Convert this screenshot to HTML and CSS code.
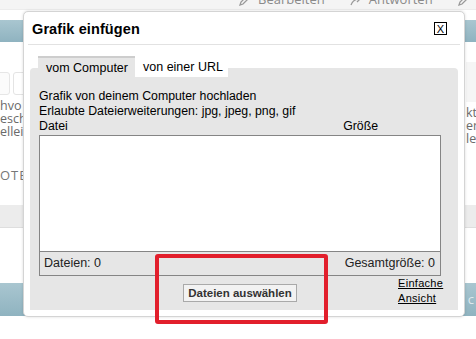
FILE: index.html
```html
<!DOCTYPE html>
<html lang="de">
<head>
<meta charset="utf-8">
<link rel="stylesheet" href="styles.css">
</head>
<body>
<div class="page">
  <div class="topbar">
    <div class="toolbar">
      <span class="tool"><svg class="ticon" width="11" height="11" viewBox="0 0 11 11"><path d="M1 10 L2 7 L8 1 L10 3 L4 9 Z" fill="none" stroke="#999" stroke-width="1.3"/></svg>Bearbeiten</span>
      <span class="sep"></span>
      <span class="tool"><svg class="ticon" width="11" height="11" viewBox="0 0 11 11"><path d="M1 10 C3 5 6 4 9 4 M7 1 L10 4 L7 7" fill="none" stroke="#999" stroke-width="1.3"/></svg>Antworten</span>
      <span class="sep"></span>
      <span class="tool"><svg class="ticon" width="11" height="11" viewBox="0 0 11 11"><path d="M1 10 L2 7 L8 1 L10 3 L4 9 Z" fill="none" stroke="#999" stroke-width="1.3"/></svg>Zitieren</span>
    </div>
  </div>
  <div class="gap"></div>
  <div class="nav"></div>
  <div class="content">
    <div class="lcol">
      <div class="boxrow"><span class="inp"></span><span class="gbtn">G</span></div>
      <div class="words">
        <div>hvo</div>
        <div>esch</div>
        <div>ellei</div>
      </div>
      <div class="quote">OTE</div>
    </div>
    <div class="rcol">
      <div class="rbox"></div>
      <div class="words">
        <div>kt</div>
        <div>er</div>
        <div>le</div>
      </div>
    </div>
  </div>
  <div class="band"></div>
  <div class="mid"></div>
  <div class="nav bottom"><span class="cc">c</span></div>
</div>

<div class="modal">
  <div class="mhead">
    <span class="mtitle">Grafik einfügen</span>
    <span class="close">X</span>
  </div>
  <div class="mbody">
    <div class="tabs">
      <span class="tab active">vom Computer</span>
      <span class="tab">von einer URL</span>
    </div>
    <div class="panel">
      <div class="line">Grafik von deinem Computer hochladen</div>
      <div class="line">Erlaubte Dateierweiterungen: jpg, jpeg, png, gif</div>
      <div class="line cols"><span>Datei</span><span class="size">Größe</span></div>
      <div class="filebox">
        <div class="list"></div>
        <div class="status"><span>Dateien: 0</span><span>Gesamtgröße: 0</span></div>
      </div>
      <div class="actions">
        <span></span>
        <span class="btn">Dateien auswählen</span>
        <a class="simple" href="#">Einfache Ansicht</a>
      </div>
    </div>
  </div>
</div>
<div class="mark"></div>
</body>
</html>
```

FILE: styles.css
```css
html, body {
  margin: 0;
  padding: 0;
  overflow: hidden;
  background: #fff;
}
body {
  width: 476px;
  height: 339px;
  position: relative;
  font-family: "Open Sans", sans-serif;
}
.page {
  width: 476px;
}
.topbar {
  height: 9px;
  background: #f4f4f4;
  border-bottom: 1px solid #ececec;
  overflow: hidden;
}
.toolbar {
  display: flex;
  align-items: flex-start;
  margin-top: -8px;
  padding-left: 239px;
  font-size: 13px;
  line-height: 14px;
  color: #8a8a8a;
  white-space: nowrap;
}
.tool {
  display: flex;
  align-items: flex-end;
  gap: 8px;
}
.ticon {
  margin-top: 2px;
}
.sep {
  width: 1px;
  height: 16px;
  background: #dcdcdc;
  margin: 0 14px 0 11px;
}
.gap {
  height: 10px;
}
.nav {
  height: 22px;
  background: linear-gradient(#a9c6d0, #8fb3c0);
}
.nav.bottom {
  height: 33px;
  overflow: hidden;
  display: flex;
  justify-content: flex-end;
  padding-right: 2px;
  color: #dfe9ed;
  font-size: 13px;
  line-height: 33px;
}
.content {
  height: 163px;
  display: flex;
  justify-content: space-between;
  overflow: hidden;
}
.lcol {
  width: 60px;
  padding-top: 30px;
}
.boxrow {
  display: flex;
  gap: 3px;
  margin-left: -10px;
  height: 23px;
}
.inp {
  width: 18px;
  height: 21px;
  border: 1px solid #e6e6e6;
  border-radius: 3px;
  background: #fbfbfb;
}
.gbtn {
  width: 30px;
  height: 21px;
  border: 1px solid #e4e4e4;
  border-radius: 3px;
  color: #d0d0d0;
  font-size: 12px;
  line-height: 21px;
  padding-left: 13px;
}
.words {
  margin-top: 4px;
  font-size: 12.5px;
  line-height: 13px;
  color: #6a6a6a;
  white-space: nowrap;
}
.quote {
  margin-top: 31px;
  font-size: 13px;
  color: #777;
  letter-spacing: 1px;
  line-height: 13px;
}
.rcol {
  width: 10px;
  padding-top: 20px;
}
.rbox {
  height: 40px;
  background: #f5f5f5;
}
.band {
  height: 22px;
  background: #ececec;
  border-bottom: 1px solid #dedede;
}
.mid {
  height: 55px;
}

/* modal */
.modal {
  position: absolute;
  left: 23px;
  top: 11px;
  width: 440px;
  height: 304px;
  background: #fff;
  border: 1px solid #d4d4d4;
  border-radius: 5px;
  box-shadow: 0 0 3px rgba(0,0,0,0.15);
  font-family: "Liberation Sans", Arial, sans-serif;
  color: #000;
}
.mhead {
  margin: 0 4px;
  height: 32px;
  border-bottom: 1px solid #e2e2e2;
  display: flex;
  justify-content: space-between;
  align-items: flex-start;
  padding: 0 13px 0 4px;
}
.mtitle {
  font-weight: bold;
  font-size: 14.5px;
  line-height: 15px;
  margin-top: 10px;
  letter-spacing: 0.1px;
}
.close {
  margin-top: 10px;
  width: 11px;
  height: 11px;
  border: 1px solid #000;
  font-size: 11px;
  line-height: 12px;
  text-align: center;
}
.mbody {
  padding: 11px 6px 0 6px;
}
.tabs {
  display: flex;
  margin-left: 8px;
  height: 21px;
  margin-bottom: -9px;
  position: relative;
  z-index: 1;
  font-size: 12.5px;
  white-space: nowrap;
}
.tab {
  height: 21px;
  line-height: 22px;
  padding: 0 8px;
  background: #fff;
  box-sizing: border-box;
}
.tab.active {
  width: 97px;
  background: #e6e6e6;
  border-top: 2px solid #cdcdcd;
  line-height: 20px;
}
.tab + .tab {
  width: 93px;
  padding: 0 8px;
}
.panel {
  height: 242px;
  box-sizing: border-box;
  background: #e6e6e6;
  border-radius: 4px 4px 0 0;
  padding: 21px 17px 0 9px;
  font-size: 12.3px;
}
.line {
  line-height: 15px;
}
.cols {
  display: flex;
  justify-content: space-between;
  padding-right: 63px;
}
.filebox {
  margin-top: 1px;
  border: 1px solid #858585;
  display: flex;
  flex-direction: column;
}
.list {
  height: 115px;
  background: #fff;
  border-bottom: 1px solid #858585;
}
.status {
  height: 23px;
  line-height: 23px;
  display: flex;
  justify-content: space-between;
  padding: 0 5px 0 4px;
  font-size: 12.5px;
  color: #222;
}
.actions {
  display: grid;
  grid-template-columns: 1fr auto 1fr;
  align-items: start;
}
.btn {
  margin-top: 8px;
  height: 18px;
  box-sizing: border-box;
  padding: 0 4px;
  border: 1px solid #a9a9a9;
  background: #f2f2f2;
  font-weight: bold;
  font-size: 11.5px;
  line-height: 16px;
  color: #333;
}
.simple {
  justify-self: end;
  width: 43px;
  font-size: 11px;
  line-height: 15px;
  color: #000;
  text-decoration: underline;
  letter-spacing: 0.3px;
}

/* annotation */
.mark {
  position: absolute;
  left: 155px;
  top: 254px;
  width: 165px;
  height: 62px;
  border: 4px solid #e21f2c;
  border-radius: 3px;
}
```
